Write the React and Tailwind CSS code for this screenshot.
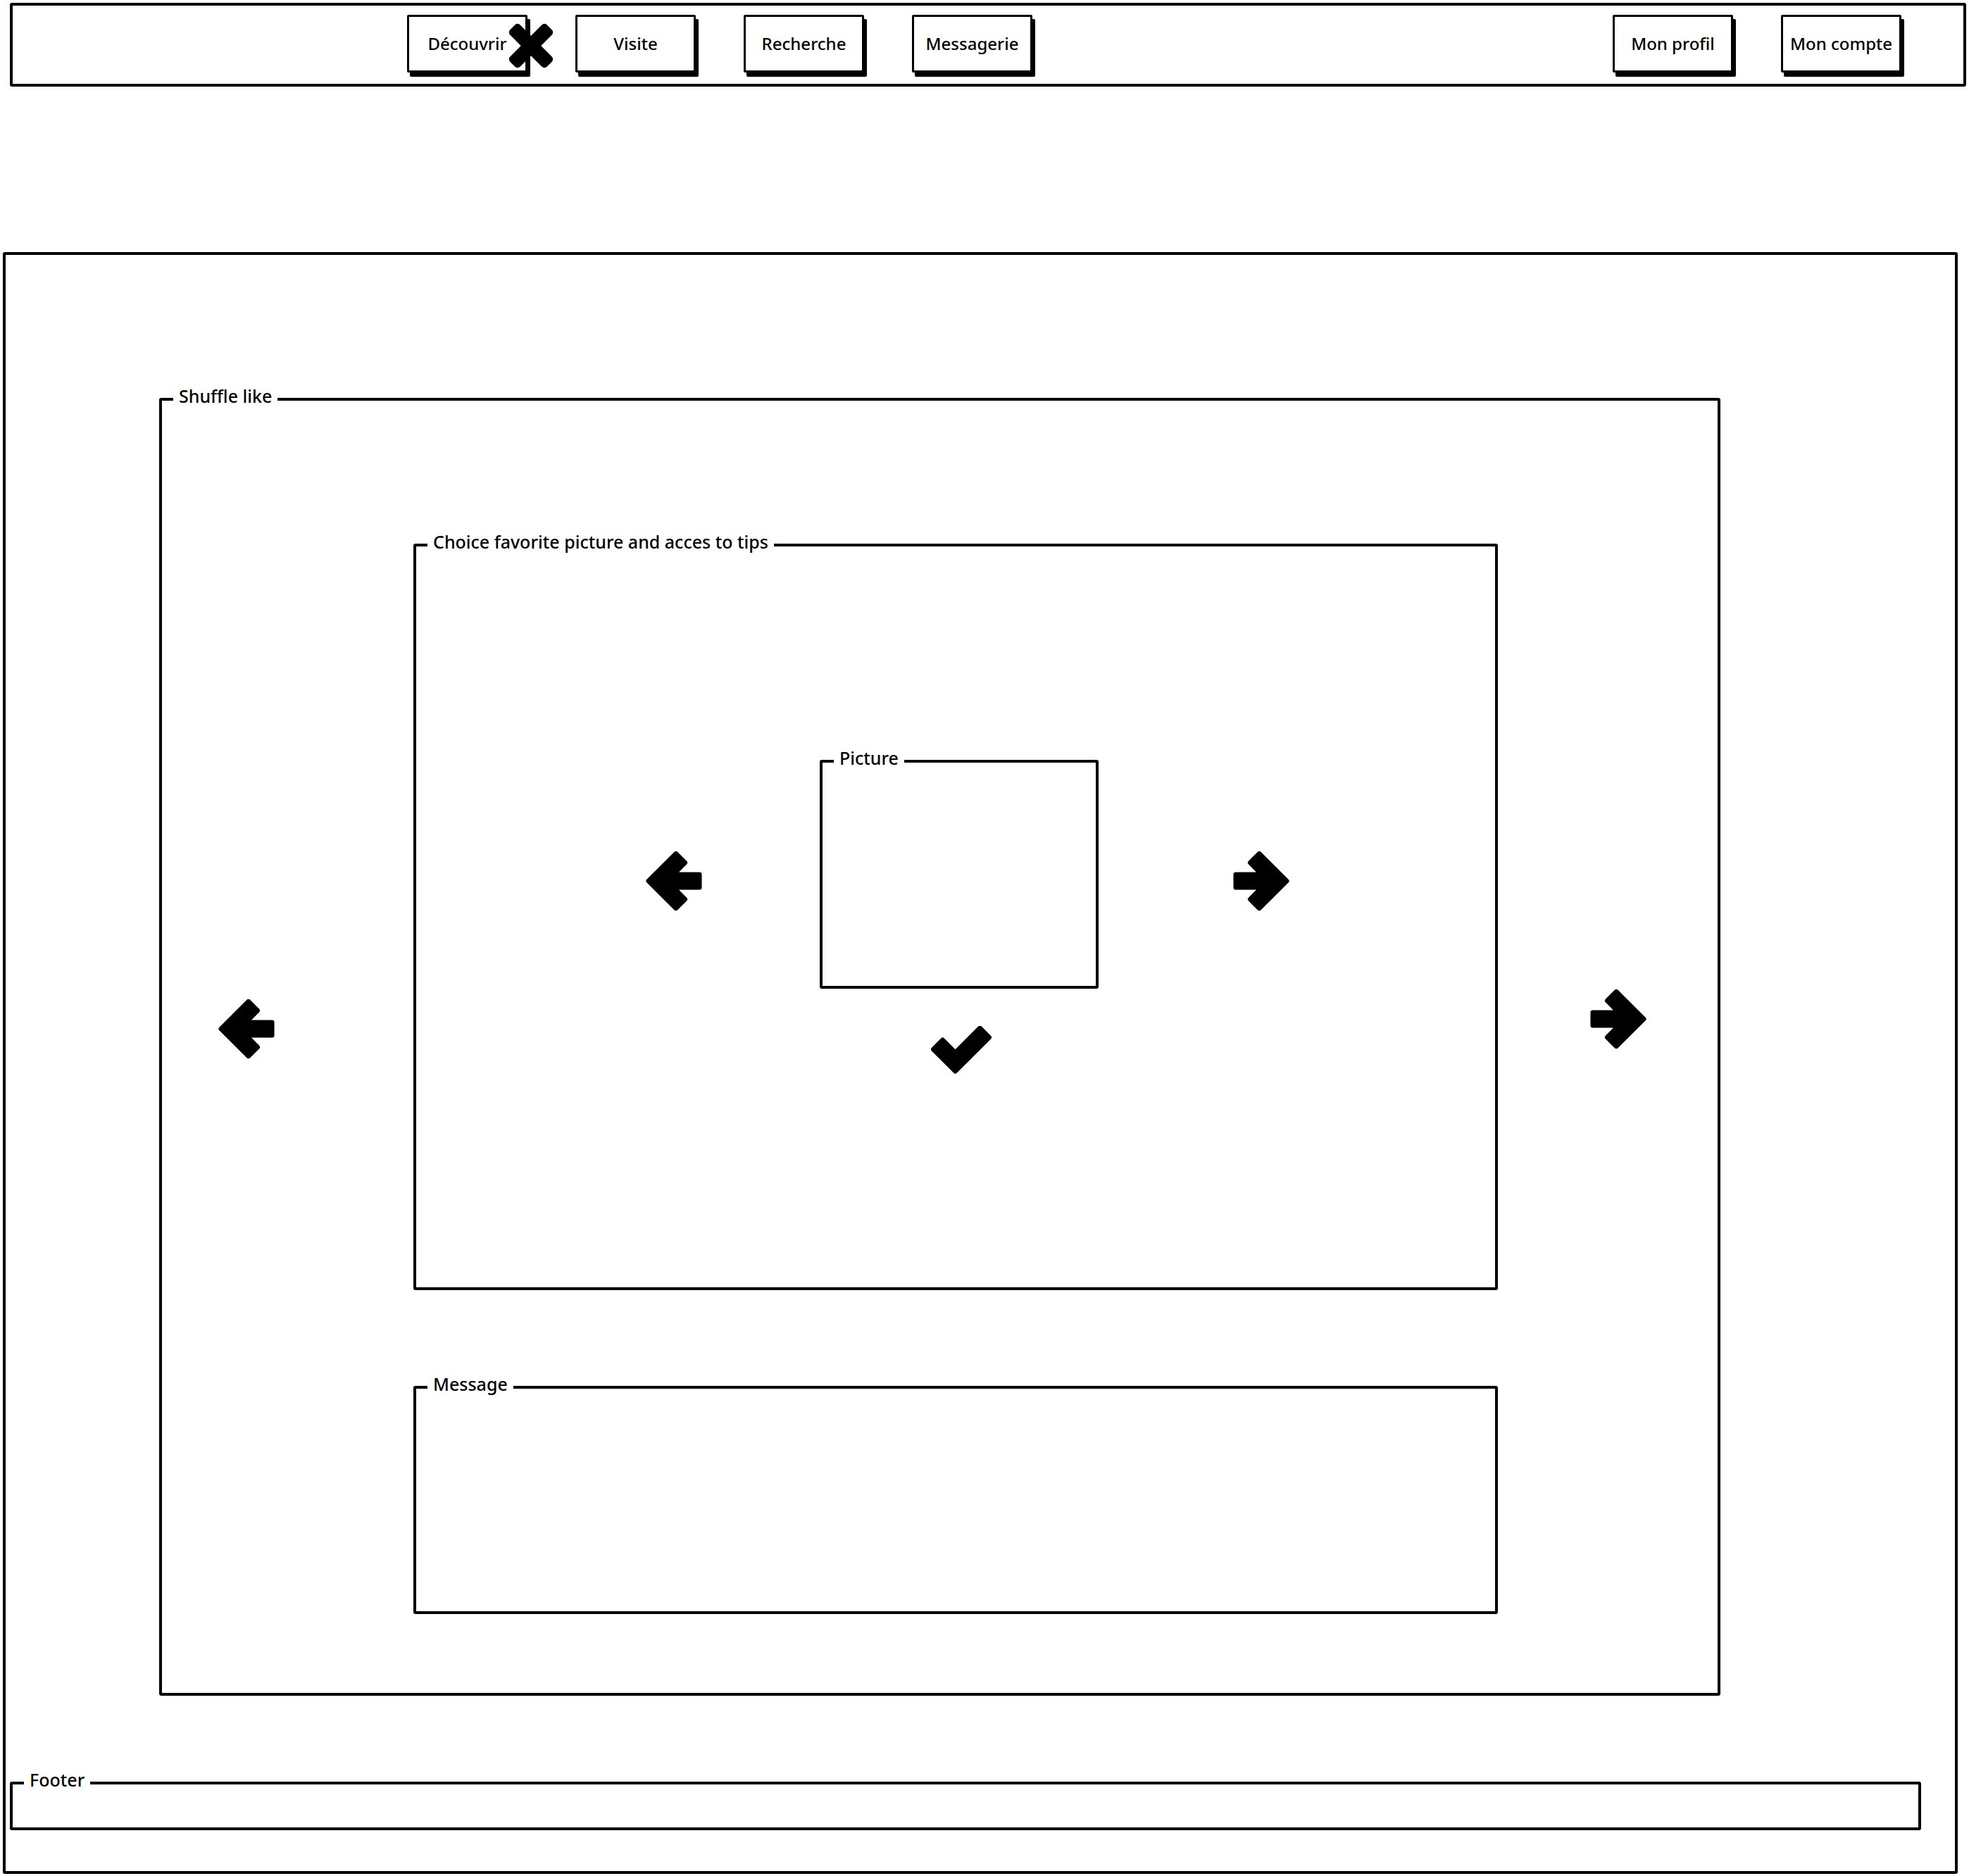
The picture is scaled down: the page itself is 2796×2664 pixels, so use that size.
import { } from "react";

/* ===========================
   ICONS (drawn, rounded corners via stroke)
=========================== */

function ArrowIcon({ direction = "right", className = "" }) {

  const points =
    "79,42 37,0 23,14 40.7,32 1,32 1,52 40.7,52 23,70 37,84";

  return (
    <svg
      viewBox="-3 -3 86 90"
      className={className}
    >
      <polygon
        points={points}
        fill="#000"
        stroke="#000"
        strokeWidth="7"
        strokeLinejoin="round"
        transform={direction === "left" ? "translate(80,0) scale(-1,1)" : undefined}
      />
    </svg>
  );

}

function CheckIcon({ className = "" }) {

  return (
    <svg
      viewBox="-3 -3 90 72"
      className={className}
    >
      <polygon
        points="0,32 14,18 33,37 70,0 84,14 33,65"
        fill="#000"
        stroke="#000"
        strokeWidth="7"
        strokeLinejoin="round"
      />
    </svg>
  );

}

function CloseIcon({ className = "" }) {

  return (
    <svg
      viewBox="0 0 68 66"
      className={className}
    >
      <rect x="-10" y="-37" width="20" height="74" rx="5" fill="#000" transform="translate(34,33) rotate(45)" />
      <rect x="-10" y="-37" width="20" height="74" rx="5" fill="#000" transform="translate(34,33) rotate(-45)" />
    </svg>
  );

}

/* ===========================
   SMALL PIECES
=========================== */

function NavButton({ label, children }) {

  return (
    <button className="relative w-[171px] h-[82px] border-[3px] border-black rounded-[2px] bg-white shadow-[4px_6px_0_#000] text-[24px] font-medium text-black leading-none">
      {label}
      {children}
    </button>
  );

}

function Group({ title, className = "", children }) {

  return (
    <fieldset className={`border-4 border-black rounded-[3px] ${className}`}>
      <legend className="ml-[16px] px-[8px] pb-[10px] text-[25px] font-medium leading-[30px] text-black">
        {title}
      </legend>
      {children}
    </fieldset>
  );

}

export default function App() {

  return (

    <div className="w-[2796px] h-[2664px] bg-white font-['Noto_Sans',sans-serif] pt-[4px] overflow-hidden">

      {/* Top nav */}

      <nav className="ml-[14px] w-[2778px] h-[119px] border-4 border-black rounded-[3px] flex items-center justify-between pl-[560px] pr-[88px] pb-[3px]">

        <div className="flex gap-[68px]">
          <NavButton label="Découvrir">
            <CloseIcon className="absolute right-[-42px] top-[8px] w-[68px] h-[66px]" />
          </NavButton>
          <NavButton label="Visite" />
          <NavButton label="Recherche" />
          <NavButton label="Messagerie" />
        </div>

        <div className="flex gap-[68px]">
          <NavButton label="Mon profil" />
          <NavButton label="Mon compte" />
        </div>

      </nav>

      {/* Main */}

      <main className="mt-[235px] ml-[4px] w-[2776px] h-[2303px] border-4 border-black rounded-[3px]">

        <Group
          title="Shuffle like"
          className="mt-[185px] ml-[218px] w-[2217px] h-[1861px]"
        >

          <div className="flex items-start pl-[80px]">

            <ArrowIcon direction="left" className="mt-[832px] w-[80px] h-[84px] shrink-0" />

            <div className="ml-[197px] mt-[167px] flex flex-col">

              <Group
                title="Choice favorite picture and acces to tips"
                className="w-[1540px] h-[1078px]"
              >

                <div className="flex items-start pl-[326px]">

                  <ArrowIcon direction="left" className="mt-[415px] w-[80px] h-[84px] shrink-0" />

                  <div className="ml-[167px] mt-[267px] flex flex-col items-center">

                    <Group
                      title="Picture"
                      className="w-[396px] h-[343px]"
                    />

                    <CheckIcon className="mt-[53px] ml-[6px] w-[86px] h-[68px]" />

                  </div>

                  <ArrowIcon direction="right" className="ml-[191px] mt-[415px] w-[80px] h-[84px] shrink-0" />

                </div>

              </Group>

              <Group
                title="Message"
                className="mt-[118px] w-[1540px] h-[342px]"
              />

            </div>

            <ArrowIcon direction="right" className="ml-[131px] mt-[818px] w-[80px] h-[84px] shrink-0" />

          </div>

        </Group>

        {/* Footer */}

        <Group
          title="Footer"
          className="mt-[104px] ml-[6px] w-[2714px] h-[87px]"
        />

      </main>

    </div>

  );

}
